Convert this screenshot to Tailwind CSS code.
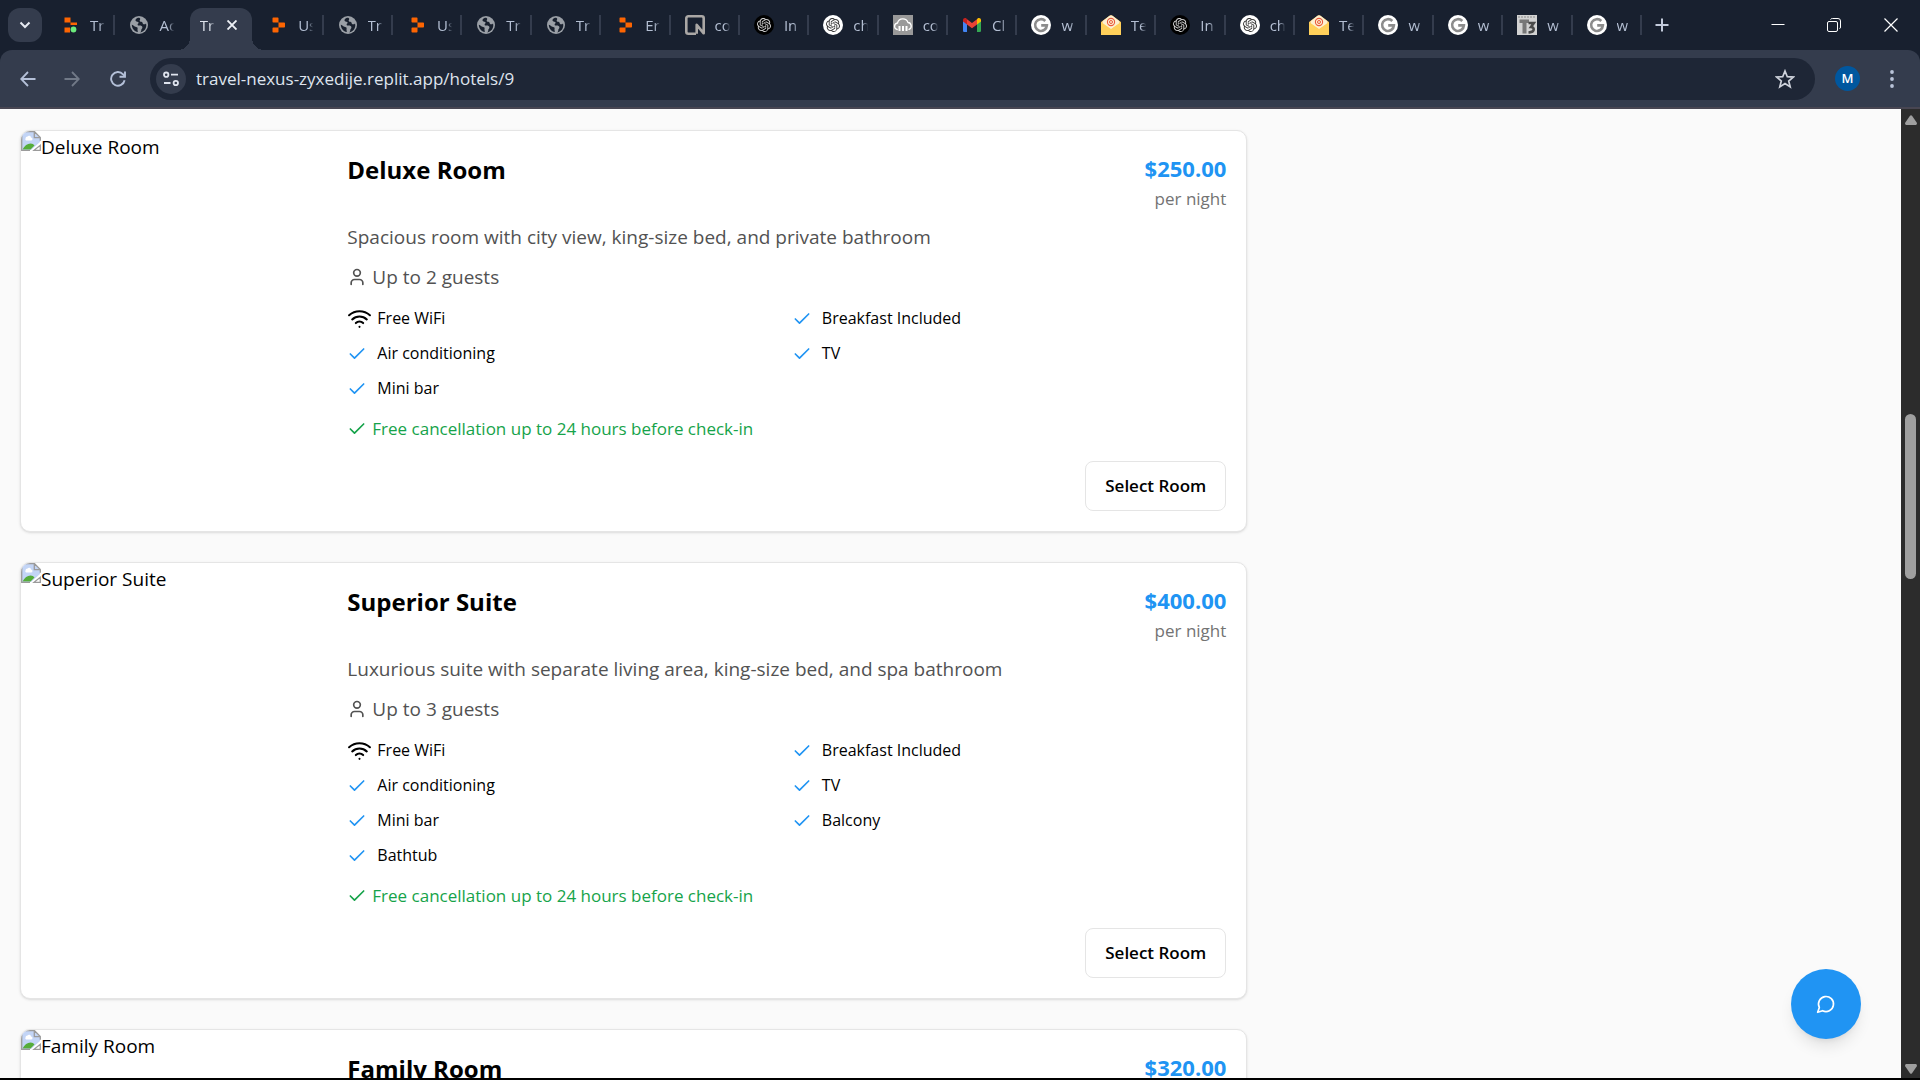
<!DOCTYPE html>
<html lang="en">
<head>
<meta charset="utf-8">
<title>Travel Nexus - Hotel rooms</title>
<script src="https://cdn.jsdelivr.net/npm/@tailwindcss/browser@4"></script>
</head>
<body class="h-screen flex flex-col overflow-hidden bg-black font-['Open_Sans','Noto_Sans',sans-serif] text-black">

<svg class="hidden" aria-hidden="true">
  <symbol id="replit" viewBox="0 0 20 20"><path fill="#fd6502" d="M4.500 3.300a.8.8 0 0 1 .8-.8h4.400a.8.8 0 0 1 .8.8v4.200h-5.200a.8.8 0 0 1-.8-.8zM10.500 7.500h5.700a.8.8 0 0 1 .8.800v3.400a.8.8 0 0 1-.8.8h-5.700zM5.300 12.500h5.200v4.200a.8.8 0 0 1-.8.8H5.300a.8.8 0 0 1-.8-.8v-3.400a.8.8 0 0 1 .8-.8z"/></symbol>
  <symbol id="replit-live" viewBox="0 0 20 20"><path fill="#fd6502" d="M4.500 2.500h6v5h-6zM10.500 7.500H17v2.500h-6.500zM4.500 12.500h5.500v5H4.500z"/><circle cx="13.500" cy="14.500" r="2.900" fill="#6bea7c"/></symbol>
  <symbol id="globe" viewBox="0 0 20 20"><circle cx="10" cy="10" r="9" fill="#9a9fa6"/><path fill="#18202e" d="M9 2.800c-2.500 1-3 2.400-2.200 3.300.7.900 2.400.5 2.800 1.400.3.900-.8 1-1 1.900-.1.900.8 1.200 2 1.200 1.600 0 2.800.6 2.800 1.800 0 1-1 1.300-1.100 2.300 0 .8-.2 1.900-1 2.700 3.500-.5 6-3.500 6-7.100 0-.7-.1-1.300-.3-1.900-.7.900-1.700 1.200-2.600.8-1-.5-.6-1.600-1.400-2.100-.8-.6-2-.1-2.300-1.100-.3-.8.700-1.300.5-2.200-.1-.7-1.100-1.200-2.200-1zM2.800 9.800c0 3.700 2.600 6.700 6 7.300.2-1-.3-1.500-.3-2.400 0-1 .4-1.500-.1-2.200-.6-.8-1.800-.5-2.700-1.100-.9-.5-1.700-1.400-2.900-1.600z"/></symbol>
  <symbol id="openai" viewBox="0 0 24 24"><path fill="currentColor" d="M22.2819 9.8211a5.9847 5.9847 0 0 0-.5157-4.9108 6.0462 6.0462 0 0 0-6.5098-2.9A6.0651 6.0651 0 0 0 4.9807 4.1818a5.9847 5.9847 0 0 0-3.9977 2.9 6.0462 6.0462 0 0 0 .7427 7.0966 5.98 5.98 0 0 0 .511 4.9107 6.051 6.051 0 0 0 6.5146 2.9001A5.9847 5.9847 0 0 0 13.2599 24a6.0557 6.0557 0 0 0 5.7718-4.2058 5.9894 5.9894 0 0 0 3.9977-2.9001 6.0557 6.0557 0 0 0-.7475-7.0729zm-9.022 12.6081a4.4755 4.4755 0 0 1-2.8764-1.0408l.1419-.0804 4.7783-2.7582a.7948.7948 0 0 0 .3927-.6813v-6.7369l2.02 1.1686a.071.071 0 0 1 .038.052v5.5826a4.504 4.504 0 0 1-4.4945 4.4944zm-9.6607-4.1254a4.4708 4.4708 0 0 1-.5346-3.0137l.142.0852 4.783 2.7582a.7712.7712 0 0 0 .7806 0l5.8428-3.3685v2.3324a.0804.0804 0 0 1-.0332.0615L9.74 19.9502a4.4992 4.4992 0 0 1-6.1408-1.6464zM2.3408 7.8956a4.485 4.485 0 0 1 2.3655-1.9728V11.6a.7664.7664 0 0 0 .3879.6765l5.8144 3.3543-2.0201 1.1685a.0757.0757 0 0 1-.071 0l-4.8303-2.7865A4.504 4.504 0 0 1 2.3408 7.872zm16.5963 3.8558L13.1038 8.364 15.1192 7.2a.0757.0757 0 0 1 .071 0l4.8303 2.7913a4.4944 4.4944 0 0 1-.6765 8.1042v-5.6772a.79.79 0 0 0-.407-.667zm2.0107-3.0231l-.142-.0852-4.7735-2.7818a.7759.7759 0 0 0-.7854 0L9.409 9.2297V6.8974a.0662.0662 0 0 1 .0284-.0615l4.8303-2.7866a4.4992 4.4992 0 0 1 6.6802 4.66zM8.3065 12.863l-2.02-1.1638a.0804.0804 0 0 1-.038-.0567V6.0742a4.4992 4.4992 0 0 1 7.3757-3.4537l-.142.0805L8.704 5.459a.7948.7948 0 0 0-.3927.6813zm1.0976-2.3654l2.602-1.4998 2.6069 1.4998v2.9994l-2.5974 1.4997-2.6067-1.4997Z"/></symbol>
  <symbol id="gpt-dark" viewBox="0 0 20 20"><circle cx="10" cy="10" r="10" fill="#000"/><use href="#openai" x="3" y="3" width="14" height="14" color="#d4d4d4"/></symbol>
  <symbol id="gpt-light" viewBox="0 0 20 20"><circle cx="10" cy="10" r="10" fill="#fff"/><use href="#openai" x="3" y="3" width="14" height="14" color="#333"/></symbol>
  <symbol id="neon" viewBox="0 0 20 20"><path fill="none" stroke="#aaa7a5" stroke-width="2.600" stroke-linejoin="round" d="M11 18.700H3.300a2 2 0 0 1-2-2V3.300a2 2 0 0 1 2-2h13.400a2 2 0 0 1 2 2v15l-7-8.500v9"/></symbol>
  <symbol id="cloud" viewBox="0 0 20 20"><path fill="#999" d="M0 0h20v20H0z"/><path fill="none" stroke="#fff" stroke-width="1.300" stroke-linecap="round" d="M4.200 14.500A3.300 3.300 0 0 1 4.500 8 5.500 5.500 0 0 1 15 7.500a3.600 3.600 0 0 1 1 6.900"/><path fill="#fff" d="M5.500 11h2v5h-2zM9 11h2v5H9zM12.500 11h2v5h-2z"/></symbol>
  <symbol id="gmail" viewBox="0 0 20 20"><path fill="#4285f4" d="M1 5v10.700c0 .8.600 1.300 1.300 1.300H5V8z"/><path fill="#34a853" d="M15 17h2.700c.7 0 1.300-.5 1.300-1.300V5l-4 3z"/><path fill="#fbbc04" d="M15 4.200V9.500l4-3V4.900c0-1.700-1.900-2.600-3.200-1.600z"/><path fill="#ea4335" d="M5 9.500V4.200L10 8l5-3.800v5.300l-5 3.700z"/><path fill="#c5221f" d="M1 4.900v1.600l4 3V4.200l-.8-.9C2.900 2.300 1 3.200 1 4.900z"/></symbol>
  <symbol id="gee" viewBox="0 0 20 20"><circle cx="10" cy="10" r="10" fill="#fff"/><path fill="none" stroke="#8c8c8c" stroke-width="2.600" d="M14.300 6A5.900 5.900 0 1 0 15.900 10.400H10.200"/></symbol>
  <symbol id="mail" viewBox="0 0 20 20"><path fill="#f5b94a" d="M0 7l8.500-6.300a2.500 2.500 0 0 1 3 0L20 7v12H0z"/><path fill="#fdf0d0" d="M1.500 6.300 8.500.8a2.500 2.500 0 0 1 3 0l7 5.500V9L10 14.500 1.500 9z"/><path fill="#ffd05a" d="M0 7l10 7 10-7v13H0z"/><circle cx="10" cy="7" r="3.600" fill="none" stroke="#ea5a3c" stroke-width="1.100"/><circle cx="10" cy="7" r="1.500" fill="none" stroke="#ea5a3c"/></symbol>
  <symbol id="tthree" viewBox="0 0 20 20"><path fill="#d2d2d2" d="M0 0h20v20H0z"/><path stroke="#8a8a8a" stroke-dasharray="2 1" d="M1 2h18"/><path fill="#777" d="M2.500 4.500H12V8H9.500v10.500h-4V8h-3z"/><path fill="none" stroke="#4a4a4a" stroke-width="2.600" d="M11.500 8h5.300L14 12c4 0 4 5.800-2.500 5.300"/></symbol>
  <symbol id="check" viewBox="0 0 24 24"><path fill="none" stroke="currentColor" stroke-width="2" stroke-linecap="round" stroke-linejoin="round" d="M20 6 9 17l-5-5"/></symbol>
  <symbol id="wifi" viewBox="0 0 24 24"><path fill="none" stroke="currentColor" stroke-width="2" stroke-linecap="round" stroke-linejoin="round" d="M12 20h.01M2 8.820a15 15 0 0 1 20 0M5 12.859a10 10 0 0 1 14 0M8.500 16.429a5 5 0 0 1 7 0"/></symbol>
  <symbol id="user" viewBox="0 0 24 24"><path fill="none" stroke="currentColor" stroke-width="2" stroke-linecap="round" stroke-linejoin="round" d="M19 21v-2a4 4 0 0 0-4-4H9a4 4 0 0 0-4 4v2"/><circle cx="12" cy="7" r="4" fill="none" stroke="currentColor" stroke-width="2"/></symbol>
  <symbol id="broken" viewBox="0 0 20 20"><path fill="#c3d5f6" d="M1 1h12l6 6v4L10 19H1z"/><path fill="#fff" d="M4.500 7.500a2 2 0 0 1 2-2 2 2 0 0 1 3.500 1 1.500 1.500 0 0 1 0 3H5a1.500 1.500 0 0 1-.500-2z"/><path fill="#55ad3a" d="M1.500 18.500c2-4 5-6 8-6 2 0 3 .800 4 2L9.500 18.500z"/><path fill="none" stroke="#9b9b9b" stroke-width="1.300" d="M9 19.300H.700V.7h12.800L19.300 6.500v3.300M13.300.7v6h6M13 19.300h6.300v-5z"/></symbol>
</svg>

<header class="shrink-0 bg-[#18202f]">
  <div class="flex h-[50px] items-center">
    <button class="ml-2 mr-1 flex size-[34px] shrink-0 items-center justify-center rounded-xl bg-[#343c4d]" aria-label="Search tabs">
      <svg class="size-3" viewBox="0 0 12 12" fill="none" stroke="#e6eaf2" stroke-width="2"><path d="M1.500 3.500 6 8l4.500-4.500"/></svg>
    </button>
    <nav id="tabs" class="grid h-full min-w-0 flex-1 grid-flow-col auto-cols-fr" aria-label="Tabs"></nav>
    <button class="ml-2 mr-[76px] flex size-6 shrink-0 items-center justify-center" aria-label="New tab">
      <svg class="size-3.5" viewBox="0 0 14 14" stroke="#c3cbdc" stroke-width="2"><path d="M7 .5v13M.5 7h13"/></svg>
    </button>
    <div class="flex h-full shrink-0">
      <button class="flex w-14 items-center justify-center" aria-label="Minimize"><svg class="size-3.5" viewBox="0 0 14 14" stroke="#fff"><path d="M.5 6.500h13"/></svg></button>
      <button class="flex w-14 items-center justify-center" aria-label="Restore"><svg class="size-3.5" viewBox="0 0 14 14" fill="none" stroke="#fff"><rect x=".5" y="3.500" width="10" height="10" rx="1.500"/><path d="M3.500 1.500Q4 .5 5.500.5H11Q13.500.5 13.500 3v6q0 1.500-1 1.500"/></svg></button>
      <button class="flex w-[58px] items-center justify-center" aria-label="Close window"><svg class="size-3.5" viewBox="0 0 14 14" stroke="#fff" stroke-width="1.200"><path d="M.5.5l13 13M13.500.5l-13 13"/></svg></button>
    </div>
  </div>

  <div class="flex h-[59px] items-center rounded-t-xl border-b-2 border-[#484652] bg-[#343c4d]">
    <button class="ml-3.5 flex size-7 items-center justify-center" aria-label="Back"><svg class="size-4" viewBox="0 0 16 16" fill="none" stroke="#b4c0d8" stroke-width="1.800"><path d="M15.500 8H1.500M8 1 1.200 8 8 15"/></svg></button>
    <button class="ml-4 flex size-7 items-center justify-center" aria-label="Forward" disabled><svg class="size-4" viewBox="0 0 16 16" fill="none" stroke="#717987" stroke-width="1.800"><path d="M.5 8h14M8 1l6.800 7L8 15"/></svg></button>
    <button class="ml-[18px] flex size-7 items-center justify-center" aria-label="Reload"><svg class="size-4" viewBox="0 0 16 16" fill="none" stroke="#b4c0d8" stroke-width="1.900"><path d="M14.600 9.200A6.800 6.800 0 1 1 13 3.300L14.800 5"/><path d="M15 .5v5.300H9.500"/></svg></button>
    <div class="ml-[18px] flex h-[42px] min-w-0 flex-1 items-center rounded-full bg-[#1e2636] pl-1.5 pr-5">
      <button class="flex size-[30px] shrink-0 items-center justify-center rounded-full bg-[#343c4d]" aria-label="Site information">
        <svg class="size-4" viewBox="0 0 16 16" fill="none" stroke="#dfe4ee" stroke-width="1.800"><circle cx="3.200" cy="3.700" r="2.200"/><path d="M8 3.700h7M1 12h6.500"/><circle cx="12.800" cy="12" r="2.200"/></svg>
      </button>
      <input class="ml-2.5 h-8 min-w-0 flex-1 bg-transparent text-[17px] text-[#dfe4ee] outline-none" type="text" aria-label="Address" value="travel-nexus-zyxedije.replit.app/hotels/9">
      <button class="flex size-5 shrink-0 items-center justify-center" aria-label="Bookmark this page"><svg class="size-5" viewBox="0 0 20 20" fill="none" stroke="#cfd3dc" stroke-width="1.700"><path d="M10 2l2.300 5.700 6 .4-4.600 3.900 1.500 5.900L10 14.600 4.800 17.900 6.300 12 1.700 8.100l6-.4z"/></svg></button>
    </div>
    <button class="ml-5 flex size-[25px] shrink-0 items-center justify-center rounded-full bg-[#00579f] text-[13px] font-semibold text-white" aria-label="Profile">M</button>
    <button class="ml-5 mr-4 flex h-7 w-6 shrink-0 items-center justify-center" aria-label="Menu"><svg class="h-[18px] w-1" viewBox="0 0 4 18" fill="#b9c3d8"><circle cx="2" cy="2" r="1.900"/><circle cx="2" cy="9" r="1.900"/><circle cx="2" cy="16" r="1.900"/></svg></button>
  </div>
</header>

<div class="relative mb-0.5 flex min-h-0 flex-1 bg-[#fafafa]">
  <main class="min-w-0 flex-1 overflow-hidden px-5 pt-[21px]">
    <div class="grid grid-cols-3 gap-10">
      <div id="rooms" class="col-span-2 flex flex-col gap-[30px]"></div>
    </div>
  </main>
  <button class="absolute bottom-[39px] right-[59px] flex size-[70px] items-center justify-center rounded-full bg-[#2094f3] shadow-lg" aria-label="Open chat">
    <svg class="size-5" viewBox="0 0 24 24" fill="none" stroke="#fff" stroke-width="2" stroke-linecap="round" stroke-linejoin="round"><path d="M7.900 20A9 9 0 1 0 4 16.100L2 22Z"/></svg>
  </button>
  <div class="flex w-[19px] shrink-0 flex-col items-center justify-between bg-[#2c2c2c] pb-1 pt-1.5" aria-hidden="true">
    <svg class="h-2.5 w-3" viewBox="0 0 12 10" fill="#9f9f9f"><path d="M5 .8q1-1.300 2 0l4.800 7q.5 1.800-1 2.200H1.200q-1.500-.4-1-2.200z"/></svg>
    <div class="flex w-full flex-1 flex-col items-center">
      <div class="h-4/13"></div>
      <div class="h-[165px] w-[11px] rounded-full bg-[#9f9f9f]"></div>
    </div>
    <svg class="h-2.5 w-3" viewBox="0 0 12 10" fill="#9f9f9f"><path d="M5 9.200q1 1.300 2 0l4.800-7Q12.300.4 10.800 0H1.200Q-.3.400.2 2.200z"/></svg>
  </div>
</div>

<script>
const tabs = [['replit-live','Tr'],['globe','Ac'],['active','Tr'],['replit','Us'],['globe','Tr'],['replit','Us'],['globe','Tr'],['globe','Tr'],['replit','Er'],['neon','co'],['gpt-dark','In'],['gpt-light','ch'],['cloud','co'],['gmail','Cl'],['gee','w'],['mail','Te'],['gpt-dark','In'],['gpt-light','ch'],['mail','Te'],['gee','w'],['gee','w'],['tthree','w'],['gee','w']];
document.getElementById('tabs').innerHTML = tabs.map(([icon, label], i) => icon === 'active'
  ? `<div class="min-w-0 pl-[5px] pr-0.5 pt-2">
       <div class="relative flex h-full items-center rounded-t-xl bg-[#343c4d] pb-2 pl-2.5">
         <span class="absolute bottom-0 right-full size-3 bg-[radial-gradient(circle_at_top_left,transparent_12px,#343c4d_12px)]"></span>
         <span class="absolute bottom-0 left-full size-3 bg-[radial-gradient(circle_at_top_right,transparent_12px,#343c4d_12px)]"></span>
         <a href="#" class="w-4 text-[15px] text-[#dde2ec] [mask-image:linear-gradient(to_right,black_60%,transparent_95%)]">${label}</a>
         <button class="ml-2 flex size-4 items-center justify-center" aria-label="Close tab"><svg class="size-2.5" viewBox="0 0 10 10" stroke="#eef1f6" stroke-width="1.900"><path d="M.5.5l9 9M9.500.5l-9 9"/></svg></button>
       </div>
     </div>`
  : `<a href="#" class="flex min-w-0 items-center">
       <svg class="ml-3.5 size-5 shrink-0"><use href="#${icon}"/></svg>
       <span class="ml-2.5 w-4 text-[15px] text-[#b4bfd3] [mask-image:linear-gradient(to_right,black_60%,transparent_95%)]">${label}</span>
       <span class="ml-auto h-5 w-0.5 ${i === 1 ? 'bg-transparent' : 'bg-[#343c4d]'}"></span>
     </a>`).join('');

const rooms = [
  {name:'Deluxe Room', price:'$250.00', guests:2, text:'Spacious room with city view, king-size bed, and private bathroom', extras:['Breakfast Included','Air conditioning','TV','Mini bar']},
  {name:'Superior Suite', price:'$400.00', guests:3, text:'Luxurious suite with separate living area, king-size bed, and spa bathroom', extras:['Breakfast Included','Air conditioning','TV','Mini bar','Balcony','Bathtub']},
];
const head = r => `
  <div class="flex w-1/4 shrink-0 text-[19px] leading-[32px]">
    <svg class="size-5 shrink-0"><use href="#broken"/></svg><span>${r.name}</span>
  </div>`;
const title = r => `
  <div class="flex justify-between">
    <h3 class="text-2xl leading-[37px] font-bold">${r.name}</h3>
    <div class="text-right">
      <p class="text-[22px] leading-[35px] font-bold text-[#2094f3]">${r.price}</p>
      <p class="text-[17px] leading-[26px] text-[#737373]">per night</p>
    </div>
  </div>`;
const card = 'flex overflow-hidden rounded-[10px] border border-[#e5e5e5] bg-white shadow-sm';
document.getElementById('rooms').innerHTML = rooms.map(r => `
  <article class="${card}">
    ${head(r)}
    <div class="min-w-0 flex-1 p-5">
      ${title(r)}
      <p class="mt-2.5 text-[19px] leading-[30px] text-[#525252]">${r.text}</p>
      <p class="mt-2.5 flex items-center gap-[5px] text-[19px] leading-[30px] text-[#525252]"><svg class="size-5"><use href="#user"/></svg>Up to ${r.guests} guests</p>
      <ul class="mt-3.5 grid grid-cols-2 gap-2.5 text-base leading-[25px]">
        <li class="flex items-center gap-[5px]"><svg class="size-[25px]"><use href="#wifi"/></svg>Free WiFi</li>
        ${r.extras.map(e => `<li class="flex items-center gap-2.5"><svg class="size-5 text-[#2094f3]"><use href="#check"/></svg>${e}</li>`).join('')}
      </ul>
      <p class="mt-[15px] flex items-center gap-[5px] text-[17px] leading-[25px] text-[#16a34a]"><svg class="size-5"><use href="#check"/></svg>Free cancellation up to 24 hours before check-in</p>
      <div class="mt-5 flex justify-end">
        <button class="h-[50px] rounded-lg border border-[#e5e5e5] bg-white px-[19px] text-[17px] font-semibold">Select Room</button>
      </div>
    </div>
  </article>`).join('') + [{name:'Family Room', price:'$320.00'}].map(r => `
  <article class="${card}">${head(r)}<div class="min-w-0 flex-1 p-5">${title(r)}</div></article>`).join('');
</script>
</body>
</html>
